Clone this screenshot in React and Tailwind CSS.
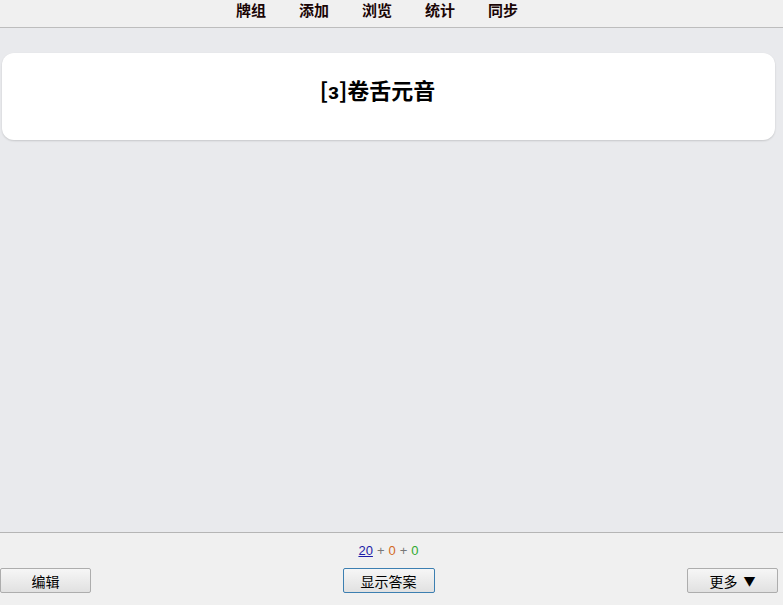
export default function App() {
  const font = { fontFamily: '"Noto Sans CJK SC", "Liberation Sans", sans-serif' };
  const btn =
    "h-[25px] w-[91px] rounded-[2px] border border-[#adadad] bg-gradient-to-b from-[#f6f6f6] to-[#e1e1e1] text-[14px] text-black flex items-center justify-center leading-none";
  return (
    <div className="h-[605px] w-[783px] flex flex-col bg-[#f0f0f0] overflow-hidden" style={font}>
      <div className="h-[28px] shrink-0 border-b border-[#bdbdbd] bg-[#f0f0f0] flex items-start justify-center pr-[29px]">
        <div className="flex gap-[33px] text-[15px] font-bold text-[#1a0505] leading-[17px] pt-[1px]">
          <span>牌组</span>
          <span>添加</span>
          <span>浏览</span>
          <span>统计</span>
          <span>同步</span>
        </div>
      </div>
      <div className="flex-1 bg-[#e9eaed] pt-[25px] pl-[2px] pr-[8px]">
        <div className="h-[87px] rounded-[12px] bg-white shadow-[0_1px_2px_rgba(0,0,0,0.15)] flex items-center justify-center pr-[22px] pb-[16px]">
          <span className="text-[22px] font-bold text-black leading-none">[ɜ]卷舌元音</span>
        </div>
      </div>
      <div className="h-[73px] shrink-0 border-t border-[#b5b5b5] bg-[#f0f0f0] flex flex-col">
        <div className="h-[35px] flex items-center justify-center pr-[6px] text-[13px] leading-none" style={{ fontFamily: '"Liberation Sans", sans-serif' }}>
          <span className="text-[#1c1ca8] underline">20</span>
          <span className="text-[#777] mx-[4px]">+</span>
          <span className="text-[#d2691e]">0</span>
          <span className="text-[#777] mx-[4px]">+</span>
          <span className="text-[#2eaa2e]">0</span>
        </div>
        <div className="flex items-start justify-between pr-[5px]">
          <button className={btn}>编辑</button>
          <button className={btn + " w-[92px] !border-[#3c7fb1] ml-[-1px]"}>显示答案</button>
          <button className={btn + " gap-[6px]"}>
            <span>更多</span>
            <span className="text-[12px]">▼</span>
          </button>
        </div>
      </div>
    </div>
  );
}
